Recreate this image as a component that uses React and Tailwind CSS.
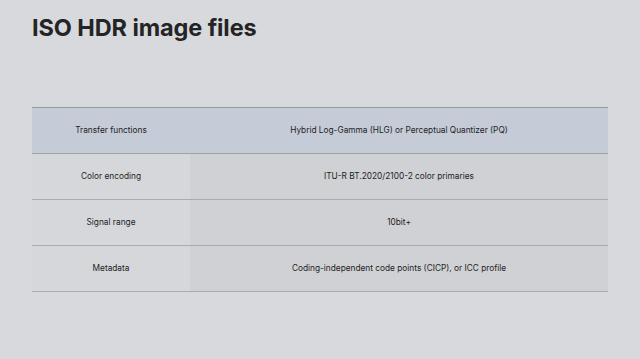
import React from 'react';

const rows = [
  { label: 'Transfer functions', value: 'Hybrid Log-Gamma (HLG) or Perceptual Quantizer (PQ)', header: true },
  { label: 'Color encoding', value: 'ITU-R BT.2020/2100-2 color primaries' },
  { label: 'Signal range', value: '10bit+' },
  { label: 'Metadata', value: 'Coding-independent code points (CICP), or ICC profile' },
];

const App = () => {
  return (
    <div
      className="w-[640px] h-[359px] bg-[#d8d9dc] text-[#1d1d1f] overflow-hidden"
      style={{ fontFamily: 'Inter, "Liberation Sans", sans-serif' }}
    >
      <h1 className="pt-[16px] pl-[32px] text-[23.5px] leading-none font-bold tracking-[-0.1px] text-[#242426]">
        ISO HDR image files
      </h1>

      <div className="mt-[67px] mx-[32px] border-t border-[#94979c]">
        {rows.map((row) => (
          <div
            key={row.label}
            className={`flex h-[46px] border-b ${row.header ? 'bg-[#c5ccd8] border-[#9ea3aa]' : 'border-[#a9abaf]'}`}
          >
            <div
              className={`w-[158px] flex items-center justify-center text-[8.3px] ${row.header ? '' : 'bg-[#d6d7da]'}`}
            >
              {row.label}
            </div>
            <div
              className={`flex-1 flex items-center justify-center text-[8.3px] ${row.header ? '' : 'bg-[#d0d1d4]'}`}
            >
              {row.value}
            </div>
          </div>
        ))}
      </div>
    </div>
  );
};

export default App;
